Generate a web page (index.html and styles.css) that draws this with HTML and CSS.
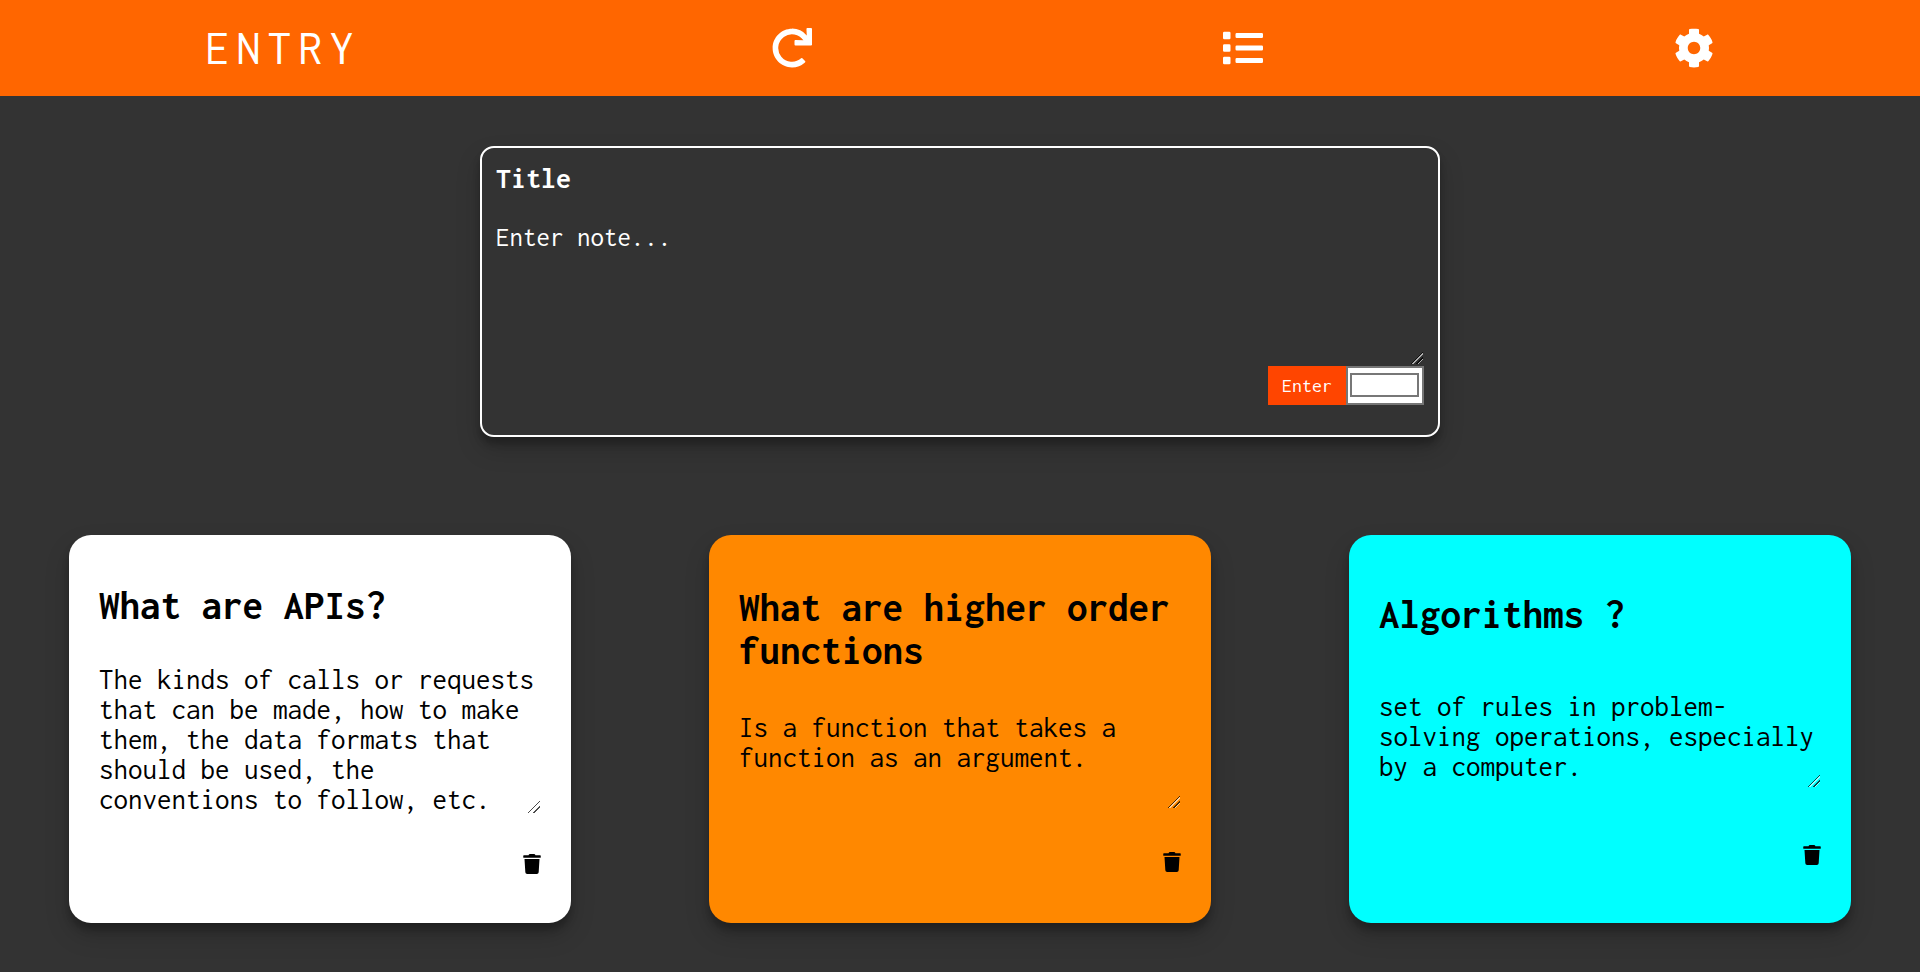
FILE: index.html
```html
<!DOCTYPE html>
<html lang="en">
<head>
<meta charset="utf-8">
<meta name="viewport" content="width=device-width, initial-scale=1">
<title>Entry</title>
<link rel="stylesheet" href="styles.css">
</head>
<body>
<svg class="sprite" aria-hidden="true">
  <symbol id="trash" viewBox="0 0 448 512"><path d="M432 32H312l-9.4-18.7A24 24 0 0 0 281.1 0H166.8a23.72 23.72 0 0 0-21.4 13.3L136 32H16A16 16 0 0 0 0 48v32a16 16 0 0 0 16 16h416a16 16 0 0 0 16-16V48a16 16 0 0 0-16-16zM53.2 467a48 48 0 0 0 47.9 45h245.8a48 48 0 0 0 47.9-45L416 128H32z"/></symbol>
</svg>
<header class="topbar">
  <h1 class="brand">ENTRY</h1>
  <button class="icon-button" type="button" aria-label="Refresh">
    <svg class="icon" viewBox="0 0 512 512"><path d="M500.33 0h-47.41a12 12 0 0 0-12 12.57l4 82.76A247.42 247.42 0 0 0 256 8C119.34 8 7.9 119.53 8 256.19 8.1 393.07 119.1 504 256 504a247.1 247.1 0 0 0 166.18-63.91 12 12 0 0 0 .48-17.43l-34-34a12 12 0 0 0-16.38-.55A176 176 0 1 1 402.1 157.8l-101.53-4.87a12 12 0 0 0-12.57 12v47.41a12 12 0 0 0 12 12h200.33a12 12 0 0 0 12-12V12a12 12 0 0 0-12-12z"/></svg>
  </button>
  <button class="icon-button" type="button" aria-label="List view">
    <svg class="icon" viewBox="0 0 512 512"><path d="M80 368H16a16 16 0 0 0-16 16v64a16 16 0 0 0 16 16h64a16 16 0 0 0 16-16v-64a16 16 0 0 0-16-16zm0-320H16A16 16 0 0 0 0 64v64a16 16 0 0 0 16 16h64a16 16 0 0 0 16-16V64a16 16 0 0 0-16-16zm0 160H16a16 16 0 0 0-16 16v64a16 16 0 0 0 16 16h64a16 16 0 0 0 16-16v-64a16 16 0 0 0-16-16zm416 176H176a16 16 0 0 0-16 16v32a16 16 0 0 0 16 16h320a16 16 0 0 0 16-16v-32a16 16 0 0 0-16-16zm0-320H176a16 16 0 0 0-16 16v32a16 16 0 0 0 16 16h320a16 16 0 0 0 16-16V80a16 16 0 0 0-16-16zm0 160H176a16 16 0 0 0-16 16v32a16 16 0 0 0 16 16h320a16 16 0 0 0 16-16v-32a16 16 0 0 0-16-16z"/></svg>
  </button>
  <button class="icon-button" type="button" aria-label="Settings">
    <svg class="icon" viewBox="0 0 512 512"><path d="M487.4 315.7l-42.6-24.6c4.3-23.2 4.3-47 0-70.2l42.6-24.6c4.9-2.8 7.1-8.6 5.5-14-11.1-35.6-30-67.8-54.7-94.6-3.8-4.1-10-5.1-14.8-2.3L380.8 110c-17.9-15.4-38.5-27.3-60.8-35.1V25.8c0-5.6-3.9-10.5-9.4-11.7-36.7-8.2-74.3-7.8-109.2 0-5.5 1.2-9.4 6.1-9.4 11.7V75c-22.2 7.9-42.8 19.8-60.8 35.1L88.7 85.5c-4.9-2.8-11-1.9-14.8 2.3-24.7 26.7-43.6 58.9-54.7 94.6-1.7 5.4.6 11.2 5.5 14L67.3 221c-4.3 23.2-4.3 47 0 70.2l-42.6 24.6c-4.9 2.8-7.1 8.6-5.5 14 11.1 35.6 30 67.8 54.7 94.6 3.8 4.1 10 5.1 14.8 2.3l42.6-24.6c17.9 15.4 38.5 27.3 60.8 35.1v49.2c0 5.6 3.9 10.5 9.4 11.7 36.7 8.2 74.3 7.8 109.2 0 5.5-1.2 9.4-6.1 9.4-11.7v-49.2c22.2-7.9 42.8-19.8 60.8-35.1l42.6 24.6c4.9 2.8 11 1.9 14.8-2.3 24.7-26.7 43.6-58.9 54.7-94.6 1.5-5.5-.7-11.3-5.6-14.1zM256 336c-44.1 0-80-35.9-80-80s35.9-80 80-80 80 35.9 80 80-35.9 80-80 80z"/></svg>
  </button>
</header>
<main>
  <form class="composer">
    <input class="composer-title" type="text" placeholder="Title" aria-label="Title">
    <textarea class="composer-note" placeholder="Enter note..." aria-label="Note"></textarea>
    <div class="composer-actions">
      <button class="enter" type="button">Enter</button>
      <input class="color" type="color" value="#ffffff" aria-label="Note color">
    </div>
  </form>
  <section class="notes">
    <article class="note note-white">
      <h2 class="note-title">What are APIs?</h2>
      <textarea class="note-text note-text-long" aria-label="What are APIs?">The kinds of calls or requests that can be made, how to make them, the data formats that should be used, the conventions to follow, etc.</textarea>
      <button class="delete" type="button" aria-label="Delete note"><svg class="trash"><use href="#trash"/></svg></button>
    </article>
    <article class="note note-orange">
      <h2 class="note-title">What are higher order functions</h2>
      <textarea class="note-text" aria-label="What are higher order functions">Is a function that takes a function as an argument.</textarea>
      <button class="delete" type="button" aria-label="Delete note"><svg class="trash"><use href="#trash"/></svg></button>
    </article>
    <article class="note note-cyan">
      <h2 class="note-title">Algorithms ?</h2>
      <textarea class="note-text" aria-label="Algorithms ?">set of rules in problem-solving operations, especially by a computer.</textarea>
      <button class="delete" type="button" aria-label="Delete note"><svg class="trash"><use href="#trash"/></svg></button>
    </article>
  </section>
</main>
</body>
</html>
```
FILE: styles.css
```css
* {
  box-sizing: border-box;
}

body {
  margin: 0;
  background: #333;
  font-family: Inconsolata, "DejaVu Sans Mono", monospace;
}

input,
textarea,
button {
  margin: 0;
  padding: 0;
  border: 0;
  outline: 0;
  background: transparent;
  font-family: inherit;
}

textarea {
  overflow: hidden;
}

textarea::-webkit-scrollbar {
  width: 18px;
  height: 18px;
}

textarea::-webkit-resizer {
  background: linear-gradient(135deg,
    transparent 8px, rgba(0, 0, 0, 0.7) 8px, rgba(0, 0, 0, 0.7) 9px,
    rgba(255, 255, 255, 0.6) 9px, rgba(255, 255, 255, 0.6) 10px,
    transparent 10px, transparent 12px,
    rgba(0, 0, 0, 0.7) 12px, rgba(0, 0, 0, 0.7) 13px,
    rgba(255, 255, 255, 0.6) 13px, rgba(255, 255, 255, 0.6) 14px,
    transparent 14px) no-repeat right 1px bottom 2px / 12px 12px;
}

.sprite {
  display: none;
}

.topbar {
  display: flex;
  align-items: center;
  justify-content: space-around;
  height: 96px;
  background: #f60;
  color: #fff;
}

.brand {
  margin: 0;
  font-size: 48px;
  font-weight: 400;
  letter-spacing: 7px;
}

.icon-button {
  color: inherit;
}

.icon {
  display: block;
  width: 40px;
  height: 40px;
  fill: currentColor;
}

.composer {
  display: flex;
  flex-direction: column;
  width: 50%;
  margin: 50px auto 98px;
  padding: 14px;
  padding-bottom: 30px;
  border: 2px solid #fff;
  border-radius: 14px;
  box-shadow: 0 12px 24px rgba(0, 0, 0, 0.19), 0 7px 7px rgba(0, 0, 0, 0.23);
  color: #fff;
}

.composer-title {
  height: 32px;
  color: inherit;
  font-size: 30px;
  font-weight: 700;
}

.composer-note {
  height: 144px;
  margin-top: 28px;
  color: inherit;
  font-size: 27px;
  line-height: 30px;
}

.composer-title::placeholder,
.composer-note::placeholder {
  color: #fff;
  opacity: 1;
}

.composer-actions {
  display: flex;
  justify-content: flex-end;
}

.enter {
  width: 78px;
  height: 39px;
  background: #ff4500;
  color: #fff;
  font-size: 20px;
}

.color {
  width: 78px;
  height: 39px;
  border: 2px solid #767676;
  background: #fff;
}

.color::-webkit-color-swatch-wrapper {
  padding: 5px 3px 6px 2px;
}

.color::-webkit-color-swatch {
  border: 2px solid #777;
}

.notes {
  display: grid;
  grid-template-columns: repeat(3, 1fr);
  gap: 138px;
  padding: 0 69px 49px;
}

.note {
  display: flex;
  flex-direction: column;
  justify-content: space-around;
  min-height: 388px;
  padding: 30px;
  border-radius: 22px;
  box-shadow: 0 12px 24px rgba(0, 0, 0, 0.19), 0 7px 7px rgba(0, 0, 0, 0.23);
  color: #000;
}

.note-white {
  background: #fff;
}

.note-orange {
  background: #f80;
}

.note-cyan {
  background: #0ff;
}

.note-title {
  margin: 0;
  font-size: 41px;
  font-weight: 700;
  line-height: 43px;
}

.note-text {
  height: 97px;
  color: inherit;
  font-size: 29px;
  line-height: 30px;
}

.note-text-long {
  height: 150px;
}

.delete {
  align-self: flex-end;
  height: 20px;
  color: inherit;
}

.trash {
  display: block;
  width: 18px;
  height: 20px;
  fill: currentColor;
}
```
